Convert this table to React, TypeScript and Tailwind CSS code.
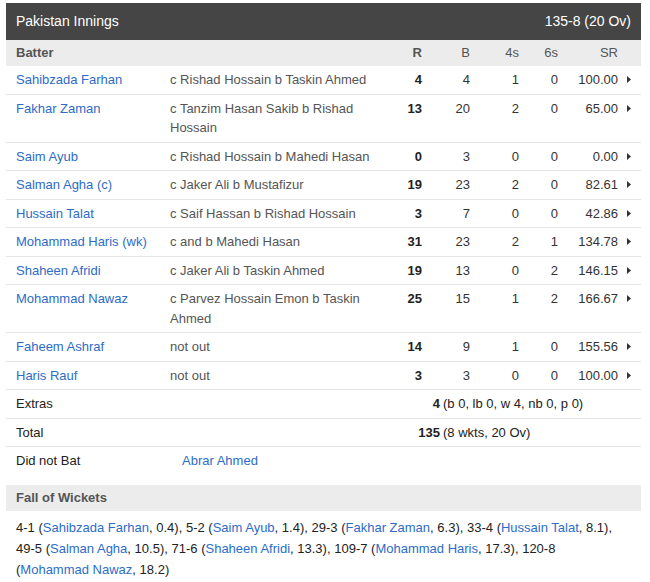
const batters = [
  { name: "Sahibzada Farhan", how: "c Rishad Hossain b Taskin Ahmed", r: 4, b: 4, f: 1, s: 0, sr: "100.00" },
  { name: "Fakhar Zaman", how: "c Tanzim Hasan Sakib b Rishad Hossain", r: 13, b: 20, f: 2, s: 0, sr: "65.00" },
  { name: "Saim Ayub", how: "c Rishad Hossain b Mahedi Hasan", r: 0, b: 3, f: 0, s: 0, sr: "0.00" },
  { name: "Salman Agha (c)", how: "c Jaker Ali b Mustafizur", r: 19, b: 23, f: 2, s: 0, sr: "82.61" },
  { name: "Hussain Talat", how: "c Saif Hassan b Rishad Hossain", r: 3, b: 7, f: 0, s: 0, sr: "42.86" },
  { name: "Mohammad Haris (wk)", how: "c and b Mahedi Hasan", r: 31, b: 23, f: 2, s: 1, sr: "134.78" },
  { name: "Shaheen Afridi", how: "c Jaker Ali b Taskin Ahmed", r: 19, b: 13, f: 0, s: 2, sr: "146.15" },
  { name: "Mohammad Nawaz", how: "c Parvez Hossain Emon b Taskin Ahmed", r: 25, b: 15, f: 1, s: 2, sr: "166.67" },
  { name: "Faheem Ashraf", how: "not out", r: 14, b: 9, f: 1, s: 0, sr: "155.56" },
  { name: "Haris Rauf", how: "not out", r: 3, b: 3, f: 0, s: 0, sr: "100.00" },
];

const wickets = [
  { score: "4-1", name: "Sahibzada Farhan", over: "0.4" },
  { score: "5-2", name: "Saim Ayub", over: "1.4" },
  { score: "29-3", name: "Fakhar Zaman", over: "6.3" },
  { score: "33-4", name: "Hussain Talat", over: "8.1" },
  { score: "49-5", name: "Salman Agha", over: "10.5" },
  { score: "71-6", name: "Shaheen Afridi", over: "13.3" },
  { score: "109-7", name: "Mohammad Haris", over: "17.3" },
  { score: "120-8", name: "Mohammad Nawaz", over: "18.2" },
];

const cols = "grid grid-cols-[164px_208px_44px_48px_49px_39px_60px_1fr]";

function Arrow() {
  return (
    <div className="flex h-[19.5px] items-center pl-[9px]">
      <svg width="4" height="7" viewBox="0 0 4 7">
        <polygon points="0,0 4,3.5 0,7" fill="#333" />
      </svg>
    </div>
  );
}

function SummaryRow({ label, num, rest }: { label: string; num: string; rest: string }) {
  return (
    <div className="flex border-b border-[#e6e6e6] py-[4px] leading-[19.5px] text-[#222]">
      <div className="w-[372px] pl-[10px]">{label}</div>
      <span className="w-[62px] text-right font-bold">{num}</span>
      <span className="pl-[3px]">{rest}</span>
    </div>
  );
}

export default function App() {
  return (
    <div className="pl-[6px] pt-[3px] font-['Liberation_Sans',Arial,sans-serif] text-[13px] text-[#222]">
      <div className="w-[635px]">
        {/* title bar */}
        <div className="flex h-[37px] items-center justify-between bg-[#454545] px-[10px] text-[14px] text-white">
          <span>Pakistan Innings</span>
          <span>135-8 (20 Ov)</span>
        </div>

        {/* column heads */}
        <div className={`${cols} bg-[#ececec] py-[3px] leading-[20px] text-[#555]`}>
          <div className="pl-[10px] font-bold">Batter</div>
          <div />
          <div className="text-right font-bold">R</div>
          <div className="text-right">B</div>
          <div className="text-right">4s</div>
          <div className="text-right">6s</div>
          <div className="text-right">SR</div>
          <div />
        </div>

        {batters.map((b) => (
          <div key={b.name} className={`${cols} border-b border-[#e6e6e6] py-[4px] leading-[19.5px]`}>
            <div className="pl-[10px]">
              <a href="#" className="text-[#2d6cc8]">{b.name}</a>
            </div>
            <div className="text-[#555]">{b.how}</div>
            <div className="text-right font-bold text-[#222]">{b.r}</div>
            <div className="text-right text-[#333]">{b.b}</div>
            <div className="text-right text-[#333]">{b.f}</div>
            <div className="text-right text-[#333]">{b.s}</div>
            <div className="text-right text-[#333]">{b.sr}</div>
            <Arrow />
          </div>
        ))}

        <SummaryRow label="Extras" num="4" rest="(b 0, lb 0, w 4, nb 0, p 0)" />
        <SummaryRow label="Total" num="135" rest="(8 wkts, 20 Ov)" />

        <div className="flex py-[4px] leading-[19.5px]">
          <div className="w-[176px] pl-[10px]">Did not Bat</div>
          <a href="#" className="text-[#2d6cc8]">Abrar Ahmed</a>
        </div>

        {/* fall of wickets */}
        <div className="mt-[10px] bg-[#ececec] py-[3px] pl-[10px] font-bold leading-[20px] text-[#555]">
          Fall of Wickets
        </div>
        <div className="px-[10px] pt-[6px] leading-[21px] text-[#222]">
          {wickets.map((w, i) => (
            <span key={w.score}>
              {w.score}{" "}
              <span className="whitespace-nowrap">
                (<a href="#" className="text-[#2d6cc8]">{w.name}</a>, {w.over})
                {i < wickets.length - 1 ? "," : ""}
              </span>{" "}
            </span>
          ))}
        </div>
      </div>
    </div>
  );
}
